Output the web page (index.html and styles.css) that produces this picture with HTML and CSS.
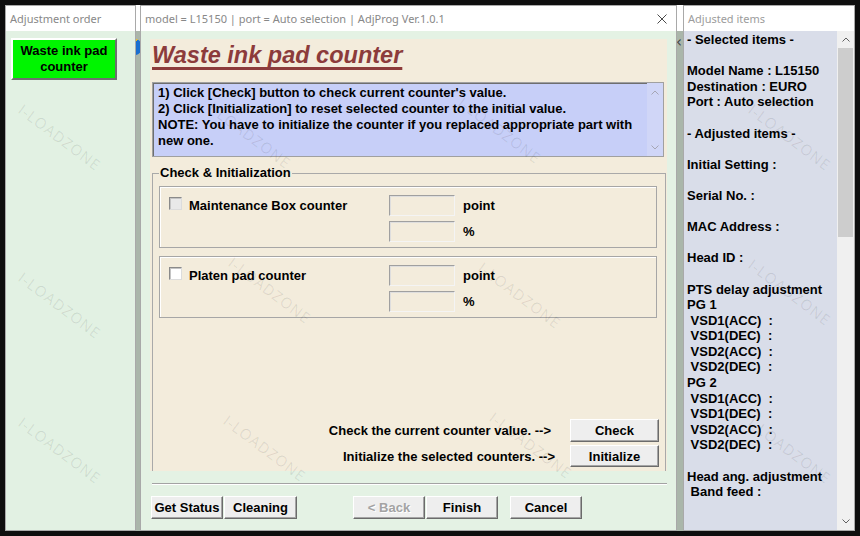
FILE: index.html
```html
<!DOCTYPE html>
<html lang="en">
  <head>
    <meta charset="UTF-8" />
    <title>AdjProg - Waste ink pad counter</title>
    <link rel="stylesheet" href="styles.css">
  </head>
  <body>
    <div class="screen">
      <section class="win win-order">
        <div class="titlebar">Adjustment order</div>
        <div class="order-body">
          <button class="order-btn">Waste ink pad<br />counter</button>
        </div>
      </section>

      <div class="gap gap-left"><span class="app-icon"></span></div>

      <section class="win win-main">
        <div class="titlebar">
          <span class="title-text">model = L15150 | port = Auto selection | AdjProg Ver.1.0.1</span>
          <svg class="close" width="10" height="10" viewBox="0 0 10 10">
            <path d="M0.5 0.5 L9.5 9.5 M9.5 0.5 L0.5 9.5" stroke="#4a4a4a" stroke-width="1" fill="none" />
          </svg>
        </div>

        <div class="main-body">
          <div class="panel">
            <h1 class="heading">Waste ink pad counter</h1>

            <div class="info">
              <div class="info-text">1) Click [Check] button to check current counter's value.<br />2) Click [Initialization] to reset selected counter to the initial value.<br />NOTE: You have to initialize the counter if you replaced appropriate part with new one.</div>
              <div class="info-scroll">
                <svg width="8" height="5" viewBox="0 0 8 5"><path d="M0.5 4.5 L4 1 L7.5 4.5" stroke="#a6a6b4" fill="none" /></svg>
                <svg width="8" height="5" viewBox="0 0 8 5"><path d="M0.5 0.5 L4 4 L7.5 0.5" stroke="#a6a6b4" fill="none" /></svg>
              </div>
            </div>

            <fieldset class="group">
              <legend>Check &amp; Initialization</legend>

              <div class="counter">
                <span class="check check-off"></span>
                <span class="counter-name">Maintenance Box counter</span>
                <span class="field"></span>
                <span class="unit">point</span>
                <span></span>
                <span></span>
                <span class="field"></span>
                <span class="unit">%</span>
              </div>

              <div class="counter">
                <span class="check"></span>
                <span class="counter-name">Platen pad counter</span>
                <span class="field"></span>
                <span class="unit">point</span>
                <span></span>
                <span></span>
                <span class="field"></span>
                <span class="unit">%</span>
              </div>

              <div class="actions">
                <span class="action-text">Check the current counter value. --&gt;</span>
                <button class="btn btn-action">Check</button>
                <span class="action-text shift">Initialize the selected counters. --&gt;</span>
                <button class="btn btn-action short">Initialize</button>
              </div>
            </fieldset>
          </div>

          <div class="separator"></div>

          <div class="footer">
            <button class="btn btn-status">Get Status</button>
            <button class="btn btn-clean">Cleaning</button>
            <button class="btn btn-back" disabled>&lt; Back</button>
            <button class="btn btn-finish">Finish</button>
            <button class="btn btn-cancel">Cancel</button>
          </div>
        </div>
      </section>

      <div class="gap gap-right"><span class="collapse">&lsaquo;</span></div>

      <section class="win win-items">
        <div class="titlebar">Adjusted items</div>
        <div class="items-body">
          <div class="items-list">- Selected items -

Model Name : L15150
Destination : EURO
Port : Auto selection

- Adjusted items -

Initial Setting :

Serial No. :

MAC Address :

Head ID :

PTS delay adjustment
PG 1
 VSD1(ACC)  :
 VSD1(DEC)  :
 VSD2(ACC)  :
 VSD2(DEC)  :
PG 2
 VSD1(ACC)  :
 VSD1(DEC)  :
 VSD2(ACC)  :
 VSD2(DEC)  :

Head ang. adjustment
 Band feed :</div>
          <div class="scrollbar">
            <svg width="8" height="5" viewBox="0 0 8 5"><path d="M0.5 4.5 L4 1 L7.5 4.5" stroke="#606060" fill="none" /></svg>
            <div class="thumb"></div>
            <svg class="down" width="8" height="5" viewBox="0 0 8 5"><path d="M0.5 0.5 L4 4 L7.5 0.5" stroke="#606060" fill="none" /></svg>
          </div>
        </div>
      </section>
    </div>

    <div class="watermarks">
      <span class="wm wm-5">I-LOADZONE</span>
      <span class="wm wm-6">I-LOADZONE</span>
      <span class="wm wm-7">I-LOADZONE</span>
      <span class="wm wm-8">I-LOADZONE</span>
      <span class="wm wm-9">I-LOADZONE</span>
      <span class="wm wm-10">I-LOADZONE</span>
      <span class="wm wm-11">I-LOADZONE</span>
      <span class="wm wm-12">I-LOADZONE</span>
      <span class="wm wm-13">I-LOADZONE</span>
      <span class="wm wm-14">I-LOADZONE</span>
      <span class="wm wm-15">I-LOADZONE</span>
      <span class="wm wm-16">I-LOADZONE</span>
    </div>
  </body>
</html>
```

FILE: styles.css
```css
* {
  margin: 0;
  padding: 0;
  box-sizing: border-box;
}

body {
  width: 860px;
  height: 536px;
  overflow: hidden;
  position: relative;
  background-color: #0e0e0e;
  font-family: "Liberation Sans", Arial, sans-serif;
  font-size: 13px;
  font-weight: bold;
  color: #000;
}

.screen {
  display: flex;
  height: 536px;
  padding: 5px;
}

/* windows */

.win {
  display: flex;
  flex-direction: column;
  border: 1px solid #a9a9a9;
  background-color: #fff;
}

.titlebar {
  flex: none;
  height: 25px;
  display: flex;
  align-items: center;
  padding-left: 4px;
  background-color: #fff;
  font-family: "Noto Sans", sans-serif;
  font-size: 11px;
  font-weight: normal;
  color: #888;
  white-space: nowrap;
}

.win-order {
  width: 131px;
}

.order-body {
  flex: 1;
  padding: 7px 5px;
  background-color: #e2f1e3;
}

.order-btn {
  width: 106px;
  height: 42px;
  background-color: #00f500;
  border: 2px solid;
  border-color: #fff #6f6f6f #6f6f6f #fff;
  font: inherit;
  line-height: 16px;
  color: #000;
}

.gap {
  flex: none;
  background: linear-gradient(#fff 0 26px, #aab6aa 26px);
  overflow: hidden;
}

.gap-left {
  width: 4px;
  position: relative;
}

.app-icon {
  position: absolute;
  left: -8px;
  top: 34px;
  width: 14px;
  height: 16px;
  border-radius: 50%;
  background: linear-gradient(135deg, #f4c21c 0 35%, #1a6fd0 35%);
}

.gap-right {
  width: 6px;
  padding-top: 29px;
  font-family: "DejaVu Sans", sans-serif;
  font-weight: normal;
  font-size: 15px;
  color: #444;
  line-height: 16px;
}

.collapse {
  display: block;
  margin-left: -1px;
}

/* main window */

.win-main {
  width: 537px;
}

.title-text {
  flex: 1;
}

.close {
  margin-right: 9px;
}

.main-body {
  flex: 1;
  padding: 8px 9px 0;
  background-color: #e4f2e4;
}

.panel {
  height: 432px;
  padding: 0 1px 0 2px;
  overflow: hidden;
  background-color: #f3ecdc;
}

.heading {
  padding-top: 3px;
  font-size: 23.5px;
  font-style: italic;
  font-weight: bold;
  line-height: 26px;
  color: #8c3b3b;
  text-decoration: underline;
  text-decoration-thickness: 3px;
  text-underline-offset: 4px;
  text-decoration-skip-ink: none;
}

.info {
  display: flex;
  width: 512px;
  height: 75px;
  margin-top: 14px;
  border: 1px solid #a0a0a0;
  box-shadow: inset 1px 1px 0 #6e6e6e;
  background-color: #c7cff8;
}

.info-text {
  flex: 1;
  padding: 2px 0 0 5px;
  line-height: 16px;
}

.info-scroll {
  width: 16px;
  display: flex;
  flex-direction: column;
  align-items: center;
  justify-content: space-between;
  padding: 7px 0 6px;
  background-color: #d0d6f7;
}

.group {
  height: 330px;
  margin-top: 8px;
  padding: 0 6px;
  border: 1px solid #a9a9a9;
}

.group legend {
  padding: 0 1px;
  line-height: 16px;
}

.counter {
  display: grid;
  grid-template-columns: 20px 200px 74px auto;
  grid-template-rows: 21px 21px;
  row-gap: 5px;
  align-items: center;
  height: 62px;
  margin: 5px 2px 0 0;
  padding: 8px 0 0 9px;
  border: 1px solid #a6a6a6;
  box-shadow: inset 1px 1px 0 #fff;
}

.counter + .counter {
  margin-top: 8px;
}

.check {
  align-self: start;
  width: 13px;
  height: 13px;
  margin-top: 2px;
  border: 1px solid;
  border-color: #8a8a8a #dcdcdc #dcdcdc #8a8a8a;
  box-shadow: inset 1px 1px 0 #c4c4c4;
  background-color: #fff;
}

.check-off {
  background-color: #e9e9e9;
}

.field {
  width: 66px;
  height: 21px;
  border: 1px solid;
  border-color: #a0a0a0 #f4f4f4 #f4f4f4 #a0a0a0;
  box-shadow: inset 1px 1px 0 #dedede;
}

.actions {
  display: grid;
  grid-template-columns: auto 89px;
  column-gap: 17px;
  row-gap: 3px;
  justify-content: end;
  align-items: center;
  margin-top: 101px;
}

.action-text {
  text-align: right;
  padding-right: 2px;
}

.action-text.shift {
  padding-right: 0;
  margin-right: -2px;
}

/* buttons */

.btn {
  height: 22px;
  border: 1px solid;
  border-color: #fff #6b6b6b #6b6b6b #fff;
  box-shadow: inset -1px -1px 0 #a5a5a5;
  background-color: #eeeeee;
  font: inherit;
  color: #000;
}

.btn-action {
  height: 23px;
}

.btn-action.short {
  height: 22px;
}

.btn:disabled {
  color: #a3a3a3;
  text-shadow: 1px 1px 0 #fff;
}

.separator {
  height: 2px;
  margin: 12px 0 0 2px;
  border-top: 1px solid #a3a3a3;
  border-bottom: 1px solid #fff;
}

.footer {
  display: flex;
  margin-top: 11px;
  padding-left: 1px;
}

.btn-status {
  width: 72px;
  height: 23px;
}

.btn-clean {
  width: 73px;
  height: 23px;
  margin-left: 1px;
}

.btn-back {
  width: 72px;
  height: 23px;
  margin-left: 56px;
}

.btn-finish {
  width: 72px;
  height: 23px;
  margin-left: 1px;
}

.btn-cancel {
  width: 72px;
  height: 23px;
  margin-left: 12px;
}

/* adjusted items window */

.win-items {
  width: 172px;
}

.win-items .titlebar {
  color: #9c9c9c;
}

.items-body {
  flex: 1;
  display: flex;
}

.items-list {
  flex: 1;
  padding: 1px 0 0 3px;
  background-color: #d9dde9;
  white-space: pre;
  line-height: 15.6px;
}

.scrollbar {
  width: 17px;
  display: flex;
  flex-direction: column;
  align-items: center;
  padding-top: 6px;
  background-color: #f0f0f0;
}

.thumb {
  width: 15px;
  height: 189px;
  margin-top: 6px;
  background-color: #cdcdcd;
}

.scrollbar .down {
  margin-top: auto;
  margin-bottom: 6px;
}

/* watermark overlay */

.watermarks {
  position: absolute;
  inset: 0;
  pointer-events: none;
}

.wm {
  position: absolute;
  width: 130px;
  text-align: center;
  font-family: "Open Sans", sans-serif;
  font-size: 15px;
  font-weight: normal;
  letter-spacing: 1px;
  line-height: 20px;
  color: rgba(0, 0, 0, 0.09);
  transform: rotate(37deg);
}

.wm-5 { left: -5px; top: 127px; }
.wm-6 { left: 185px; top: 125px; }
.wm-7 { left: 435px; top: 120px; }
.wm-8 { left: 725px; top: 127px; }
.wm-9 { left: -5px; top: 295px; }
.wm-10 { left: 205px; top: 280px; }
.wm-11 { left: 455px; top: 285px; }
.wm-12 { left: 725px; top: 282px; }
.wm-13 { left: -5px; top: 440px; }
.wm-14 { left: 200px; top: 438px; }
.wm-15 { left: 466px; top: 435px; }
.wm-16 { left: 725px; top: 440px; }
```
